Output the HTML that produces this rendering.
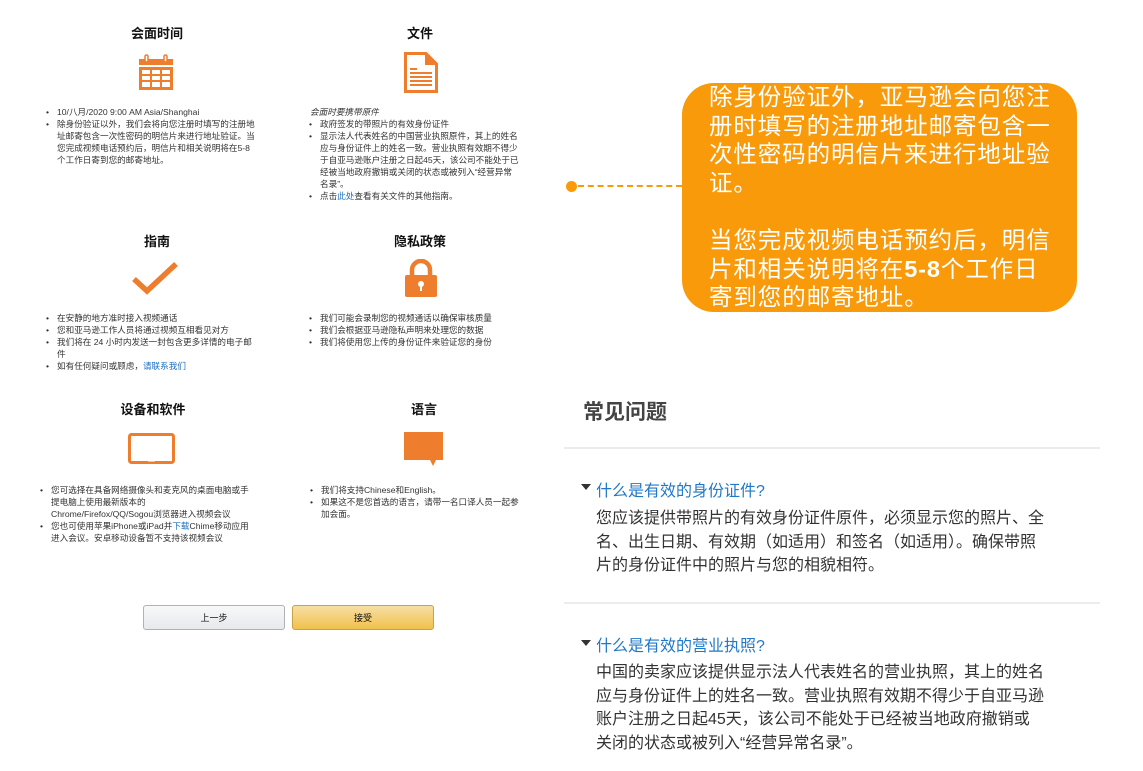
<!DOCTYPE html>
<html><head><meta charset="utf-8">
<style>
*{margin:0;padding:0;box-sizing:border-box}
body{width:1143px;height:771px;background:#fff;position:relative;overflow:hidden;font-family:"Liberation Sans","Noto Sans CJK SC",sans-serif;color:#222}
.a{position:absolute;white-space:nowrap}
.h{font-size:13px;font-weight:bold;color:#111;transform:translateX(-50%)}
.s{font-size:8.6px;line-height:12px;color:#333}
.s .b{position:absolute;left:-11px}
.lk{color:#1a6fc2}
.btn{position:absolute;height:25px;border-radius:3px;font-size:9px;text-align:center;line-height:24px;color:#111}
.cb{position:absolute;left:682px;top:83px;width:395px;height:229px;background:#f99a0b;border-radius:32px;color:#fff;font-size:23.5px;line-height:28.6px;padding:0 0 0 27px;letter-spacing:0.9px;overflow:hidden}
.q{font-size:16px;color:#1f78c8}
.ans{font-size:16px;line-height:23.6px;color:#333}
.hr{position:absolute;left:564px;width:536px;height:2px;background:#ececec}
</style></head><body>

<div class="a h" style="left:157px;top:23px">会面时间</div>
<div class="a h" style="left:420px;top:23px">文件</div>
<div class="a h" style="left:157px;top:231px">指南</div>
<div class="a h" style="left:420px;top:231px">隐私政策</div>
<div class="a h" style="left:153px;top:399px">设备和软件</div>
<div class="a h" style="left:424px;top:399px">语言</div>

<svg class="a" style="left:137px;top:54px" width="38" height="37" viewBox="0 0 38 37">
<rect x="2" y="5" width="34" height="6" fill="#ee7d2e"/>
<rect x="8" y="1" width="3" height="7" rx="1.5" fill="#fff" stroke="#ee7d2e" stroke-width="1.5"/>
<rect x="27" y="1" width="3" height="7" rx="1.5" fill="#fff" stroke="#ee7d2e" stroke-width="1.5"/>
<rect x="2" y="13" width="34" height="23" fill="#ee7d2e"/>
<g fill="#fff"><rect x="5" y="16" width="8" height="4"/><rect x="15" y="16" width="8" height="4"/><rect x="25" y="16" width="8" height="4"/>
<rect x="5" y="22" width="8" height="4"/><rect x="15" y="22" width="8" height="4"/><rect x="25" y="22" width="8" height="4"/>
<rect x="5" y="28" width="8" height="5"/><rect x="15" y="28" width="8" height="5"/><rect x="25" y="28" width="8" height="5"/></g>
</svg>
<svg class="a" style="left:404px;top:52px" width="34" height="41" viewBox="0 0 34 41">
<path d="M1.5 1.5H22L32.5 12V39.5H1.5Z" fill="#fff" stroke="#ee7d2e" stroke-width="3"/>
<path d="M21 1.5V13H32.5" fill="#ee7d2e"/>
<g fill="#ee7d2e"><rect x="6" y="16" width="7" height="2"/><rect x="6" y="20" width="22" height="2"/><rect x="6" y="24" width="22" height="2"/><rect x="6" y="28" width="22" height="2"/><rect x="6" y="32" width="22" height="2"/></g>
</svg>
<svg class="a" style="left:130px;top:260px" width="50" height="36" viewBox="0 0 50 36">
<path d="M4 19L17 31L46 4" fill="none" stroke="#ee7d2e" stroke-width="5.5"/>
</svg>
<svg class="a" style="left:403px;top:259px" width="36" height="39" viewBox="0 0 36 39">
<path d="M9 17V11A9 9 0 0 1 27 11V17" fill="none" stroke="#ee7d2e" stroke-width="4.5"/>
<rect x="2" y="16" width="32" height="22" rx="2" fill="#ee7d2e"/>
<circle cx="18" cy="25" r="3" fill="#fff"/><rect x="17" y="26" width="2" height="6" fill="#fff"/>
</svg>
<svg class="a" style="left:128px;top:433px" width="47" height="31" viewBox="0 0 47 31">
<rect x="1.5" y="1.5" width="44" height="28" rx="2" fill="#fff" stroke="#ee7d2e" stroke-width="3"/>
<rect x="20" y="27" width="7" height="1.5" fill="#fff"/>
</svg>
<svg class="a" style="left:404px;top:432px" width="40" height="35" viewBox="0 0 40 35">
<path d="M0 0H39V28H32L29 34L26 28H0Z" fill="#ee7d2e"/>
</svg>

<div class="a s" style="left:57px;top:106px">
<span class="b">•</span>10/八月/2020 9:00 AM Asia/Shanghai<br>
<span class="b" style="top:12px">•</span>除身份验证以外，我们会将向您注册时填写的注册地<br>址邮寄包含一次性密码的明信片来进行地址验证。当<br>您完成视频电话预约后，明信片和相关说明将在5-8<br>个工作日寄到您的邮寄地址。
</div>
<div class="a s" style="left:310px;top:106px;font-style:italic">会面时要携带原件</div>
<div class="a s" style="left:320px;top:118px">
<span class="b">•</span>政府签发的带照片的有效身份证件<br>
<span class="b" style="top:12px">•</span>显示法人代表姓名的中国营业执照原件，其上的姓名<br>应与身份证件上的姓名一致。营业执照有效期不得少<br>于自亚马逊账户注册之日起45天，该公司不能处于已<br>经被当地政府撤销或关闭的状态或被列入“经营异常<br>名录”。<br>
<span class="b" style="top:72px">•</span>点击<span class="lk">此处</span>查看有关文件的其他指南。
</div>

<div class="a s" style="left:57px;top:312px">
<span class="b">•</span>在安静的地方准时接入视频通话<br>
<span class="b" style="top:12px">•</span>您和亚马逊工作人员将通过视频互相看见对方<br>
<span class="b" style="top:24px">•</span>我们将在 24 小时内发送一封包含更多详情的电子邮<br>件<br>
<span class="b" style="top:48px">•</span>如有任何疑问或顾虑，<span class="lk">请联系我们</span>
</div>
<div class="a s" style="left:320px;top:312px">
<span class="b">•</span>我们可能会录制您的视频通话以确保审核质量<br>
<span class="b" style="top:12px">•</span>我们会根据亚马逊隐私声明来处理您的数据<br>
<span class="b" style="top:24px">•</span>我们将使用您上传的身份证件来验证您的身份
</div>

<div class="a s" style="left:51px;top:484px">
<span class="b">•</span>您可选择在具备网络摄像头和麦克风的桌面电脑或手<br>提电脑上使用最新版本的<br>Chrome/Firefox/QQ/Sogou浏览器进入视频会议<br>
<span class="b" style="top:36px">•</span>您也可使用苹果iPhone或iPad并<span class="lk">下载</span>Chime移动应用<br>进入会议。安卓移动设备暂不支持该视频会议
</div>
<div class="a s" style="left:321px;top:484px">
<span class="b">•</span>我们将支持Chinese和English。<br>
<span class="b" style="top:12px">•</span>如果这不是您首选的语言，请带一名口译人员一起参<br>加会面。
</div>

<div class="btn" style="left:143px;top:605px;width:142px;background:linear-gradient(#f7f8fa,#e7e9ec);border:1px solid #adb1b8">上一步</div>
<div class="btn" style="left:292px;top:605px;width:142px;background:linear-gradient(#f7dfa5,#f0c14b);border:1px solid #c9a244">接受</div>

<div class="a" style="left:566px;top:181px;width:11px;height:11px;border-radius:50%;background:#f99a0b"></div>
<div class="a" style="left:578px;top:185px;width:104px;border-top:2px dashed #f99a0b"></div>
<div class="cb"><div style="margin-top:0px">除身份验证外，亚马逊会向您注<br>册时填写的注册地址邮寄包含一<br>次性密码的明信片来进行地址验<br>证。<br><br>当您完成视频电话预约后，明信<br>片和相关说明将在<b>5-8</b>个工作日<br>寄到您的邮寄地址。</div></div>

<div class="a" style="left:583px;top:396px;font-size:21px;font-weight:bold;color:#444">常见问题</div>
<div class="hr" style="top:447px"></div>
<div class="a" style="left:581px;top:484px;width:0;height:0;border-left:5px solid transparent;border-right:5px solid transparent;border-top:6px solid #333"></div>
<div class="a q" style="left:596px;top:477px">什么是有效的身份证件?</div>
<div class="a ans" style="left:596px;top:507px">您应该提供带照片的有效身份证件原件，必须显示您的照片、全<br>名、出生日期、有效期（如适用）和签名（如适用）。确保带照<br>片的身份证件中的照片与您的相貌相符。</div>
<div class="hr" style="top:602px"></div>
<div class="a" style="left:581px;top:640px;width:0;height:0;border-left:5px solid transparent;border-right:5px solid transparent;border-top:6px solid #333"></div>
<div class="a q" style="left:596px;top:632px">什么是有效的营业执照?</div>
<div class="a ans" style="left:596px;top:661px">中国的卖家应该提供显示法人代表姓名的营业执照，其上的姓名<br>应与身份证件上的姓名一致。营业执照有效期不得少于自亚马逊<br>账户注册之日起45天，该公司不能处于已经被当地政府撤销或<br>关闭的状态或被列入“经营异常名录”。</div>

</body></html>
